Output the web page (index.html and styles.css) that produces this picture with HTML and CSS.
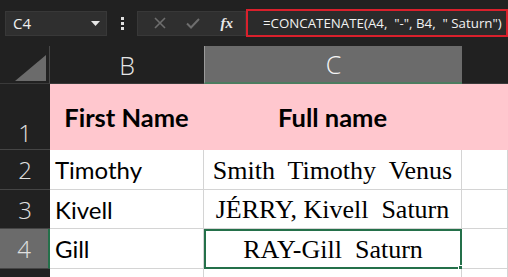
FILE: index.html
```html
<!doctype html>
<html lang="en">
  <head>
    <meta charset="UTF-8" />
    <title>Sheet</title>
    <link rel="stylesheet" href="styles.css">
  </head>
  <body>
    <div class="toolbar">
      <div class="name-box">
        <span>C4</span>
        <svg class="caret" width="9" height="5" viewBox="0 0 9 5"><path d="M0 0h9L4.5 5z" fill="#e6e6e6"/></svg>
      </div>
      <div class="dots">
        <i></i><i></i><i></i>
      </div>
      <div class="fx-buttons">
        <svg width="12" height="12" viewBox="0 0 12 12"><path d="M1 1l10 10M11 1L1 11" stroke="#6e6e6e" stroke-width="1.6"/></svg>
        <svg width="14" height="11" viewBox="0 0 14 11"><path d="M1 5.5l4 4L13 1" stroke="#6e6e6e" stroke-width="2" fill="none"/></svg>
        <span class="fx">fx</span>
      </div>
      <div class="formula">=CONCATENATE(A4,  "-", B4,  " Saturn")</div>
    </div>

    <div class="sheet">
      <div class="corner">
        <svg width="31" height="26" viewBox="0 0 31 26"><path d="M0 26L31 0v26z" fill="#6b6b6b"/></svg>
      </div>
      <div class="col-head">B</div>
      <div class="col-head active">C</div>
      <div class="col-head last"></div>

      <div class="row-head first">1</div>
      <div class="cell title">First Name</div>
      <div class="cell title">Full name</div>
      <div class="cell title"></div>

      <div class="row-head">2</div>
      <div class="cell name">Timothy</div>
      <div class="cell full">Smith  Timothy  Venus</div>
      <div class="cell"></div>

      <div class="row-head">3</div>
      <div class="cell name">Kivell</div>
      <div class="cell full">JÉRRY, Kivell  Saturn</div>
      <div class="cell"></div>

      <div class="row-head active">4</div>
      <div class="cell name">Gill</div>
      <div class="cell full selected">RAY-Gill  Saturn<span class="handle"></span></div>
      <div class="cell"></div>

      <div class="row-head"></div>
      <div class="cell"></div>
      <div class="cell"></div>
      <div class="cell"></div>
    </div>
  </body>
</html>
```

FILE: styles.css
```css
* {
  margin: 0;
  padding: 0;
  box-sizing: border-box;
}

body {
  width: 508px;
  height: 277px;
  overflow: hidden;
  background: #212121;
  font-family: 'Open Sans', sans-serif;
}

.toolbar {
  display: flex;
  align-items: center;
  height: 28px;
  margin-top: 9px;
}

.name-box {
  display: flex;
  align-items: center;
  justify-content: space-between;
  width: 102px;
  height: 25px;
  margin-left: 5px;
  padding: 0 6px 0 7px;
  background: #2f2f2f;
  border: 1px solid #383838;
  color: #f0f0f0;
  font-size: 15px;
}

.dots {
  display: flex;
  flex-direction: column;
  align-items: center;
  gap: 2px;
  width: 30px;
}

.dots i {
  width: 3px;
  height: 3px;
  background: #e0e0e0;
}

.fx-buttons {
  display: flex;
  align-items: center;
  justify-content: space-around;
  width: 109px;
  height: 25px;
  padding: 0 2px 0 6px;
  background: #2f2f2f;
  border: 1px solid #383838;
}

.fx {
  font-family: 'Liberation Serif', serif;
  font-style: italic;
  font-weight: bold;
  font-size: 15px;
  color: #e8e8e8;
}

.formula {
  flex: 1;
  height: 28px;
  padding-left: 15px;
  border: 2px solid #d9202c;
  background: #2b2b2b;
  color: #f2f2f2;
  font-size: 13.3px;
  line-height: 24px;
  white-space: pre;
  overflow: hidden;
}

.sheet {
  display: grid;
  grid-template-columns: 50px 154px 258px 46px;
  grid-template-rows: 38px 66px 40px 39px 40px 20px;
  margin-top: 9px;
}

.corner {
  display: flex;
  align-items: flex-end;
  justify-content: flex-end;
  padding: 0 3px 2px 0;
  border-right: 1px solid #474747;
  border-bottom: 1px solid #3a3a3a;
}

.col-head {
  display: flex;
  align-items: center;
  justify-content: center;
  color: #e6e6e6;
  font-size: 25px;
  font-weight: 300;
  border-bottom: 1px solid #3a3a3a;
}

.col-head.active {
  background: #6b6b6b;
  color: #f5f5f5;
  border-left: 1px solid #9a9a9a;
  border-bottom: 2px solid #4d7c60;
}

.row-head {
  display: flex;
  align-items: center;
  justify-content: center;
  color: #e0e0e0;
  font-size: 24px;
  font-weight: 300;
  border-bottom: 1px solid #454545;
}

.row-head.first {
  align-items: flex-end;
}

.row-head.active {
  background: #6b6b6b;
  border-right: 2px solid #24704a;
}

.cell {
  position: relative;
  display: flex;
  align-items: center;
  background: #fff;
  color: #000;
  border-right: 1px solid #d4d4d4;
  border-bottom: 1px solid #d4d4d4;
  white-space: pre;
}

.cell.title {
  justify-content: center;
  background: #ffc7ce;
  border-color: #ffc7ce;
  font-family: 'Lato', sans-serif;
  font-weight: bold;
  font-size: 25.5px;
}

.cell.name {
  padding-left: 5px;
  font-family: 'Lato', sans-serif;
  font-size: 24px;
}

.cell.full {
  justify-content: center;
  padding-top: 2px;
  font-family: 'Liberation Serif', serif;
  font-size: 26px;
}

.cell.selected {
  border: 2px solid #24704a;
}

.handle {
  position: absolute;
  right: -5px;
  bottom: -5px;
  width: 7px;
  height: 7px;
  background: #24704a;
  border: 1px solid #fff;
}
```
